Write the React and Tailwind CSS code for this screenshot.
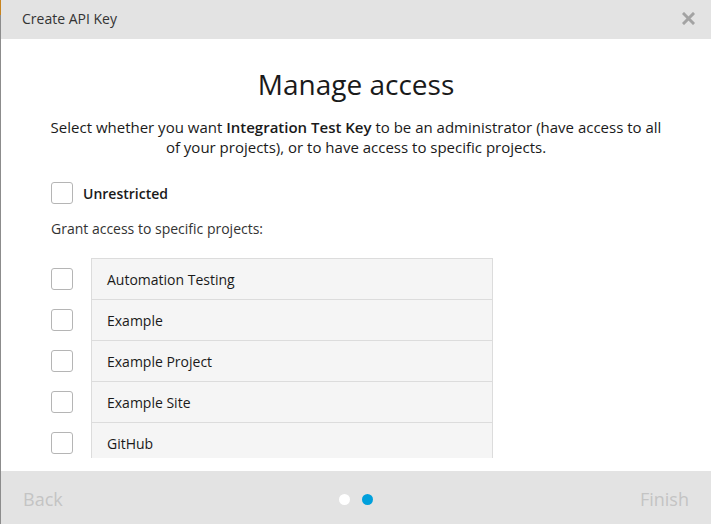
import { useState } from 'react'

const projects = ['Automation Testing', 'Example', 'Example Project', 'Example Site', 'GitHub', 'Marketing Site']

function Box({ checked, onClick }) {
  return (
    <button
      type="button"
      onClick={onClick}
      className="w-[22px] h-[22px] shrink-0 rounded-[3px] border border-[#b5b5b5] bg-white flex items-center justify-center"
    >
      {checked && (
        <svg width="14" height="14" viewBox="0 0 14 14" fill="none">
          <path d="M2 7l3.5 3.5L12 3.5" stroke="#00a0dc" strokeWidth="2" strokeLinecap="round" strokeLinejoin="round" />
        </svg>
      )}
    </button>
  )
}

export default function App() {
  const [unrestricted, setUnrestricted] = useState(false)
  const [picked, setPicked] = useState({})

  return (
    <div className="flex h-[524px] w-[711px] overflow-hidden font-['Open_Sans',sans-serif]">
      {/* page behind the modal */}
      <div className="w-px flex flex-col shrink-0">
        <div className="h-[15px] bg-[#c8841e]" />
        <div className="flex-1 bg-[#8c8c8c]" />
      </div>

      <div className="flex-1 flex flex-col bg-white">
        {/* Header */}
        <div className="h-[39px] shrink-0 bg-[#e3e3e3] flex items-center justify-between pb-[2px] pl-[21px] pr-[16px]">
          <span className="text-[14px] text-[#333]">Create API Key</span>
          <svg width="13" height="13" viewBox="0 0 13 13">
            <path d="M2 2l9 9M11 2l-9 9" stroke="#a3a3a3" strokeWidth="3" strokeLinecap="square" />
          </svg>
        </div>

        {/* Body */}
        <div className="flex-1 overflow-hidden pt-[26px]">
          <h1 className="text-center text-[28px] leading-[38px] text-[#1a1a1a]">Manage access</h1>
          <p className="mt-[14px] mx-auto w-[615px] text-center text-[15px] leading-[20px] text-[#1a1a1a]">
            Select whether you want <span className="font-semibold">Integration Test Key</span> to be an administrator (have access to all of your projects), or to have access to specific projects.
          </p>

          <div className="px-[50px]">
            <label className="mt-[25px] flex items-center gap-[10px]">
              <Box checked={unrestricted} onClick={() => setUnrestricted(v => !v)} />
              <span className="text-[14px] font-semibold text-[#1a1a1a]">Unrestricted</span>
            </label>

            <p className="mt-[15px] text-[14px] leading-[20px] text-[#333]">Grant access to specific projects:</p>

            <div className="mt-[19px] h-[200px] overflow-hidden">
              {projects.map(name => (
                <div key={name} className="flex items-center gap-[18px]">
                  <Box checked={!!picked[name]} onClick={() => setPicked(p => ({ ...p, [name]: !p[name] }))} />
                  <div className="w-[402px] h-[41px] border border-b-0 border-[#dcdcdc] bg-[#f5f5f5] flex items-center px-[15px] text-[14px] text-[#1a1a1a]">
                    {name}
                  </div>
                </div>
              ))}
            </div>
          </div>
        </div>

        {/* Footer */}
        <div className="h-[53px] shrink-0 bg-[#e3e3e3] flex items-center justify-between pt-[4px] pl-[22px] pr-[22px]">
          <span className="text-[18px] text-[#c4c4c4]">Back</span>
          <div className="flex items-center gap-[12px] ml-[10px]">
            <span className="w-[11px] h-[11px] rounded-full bg-white" />
            <span className="w-[11px] h-[11px] rounded-full bg-[#00a0dc]" />
          </div>
          <span className="text-[18px] text-[#c4c4c4]">Finish</span>
        </div>
      </div>
    </div>
  )
}
